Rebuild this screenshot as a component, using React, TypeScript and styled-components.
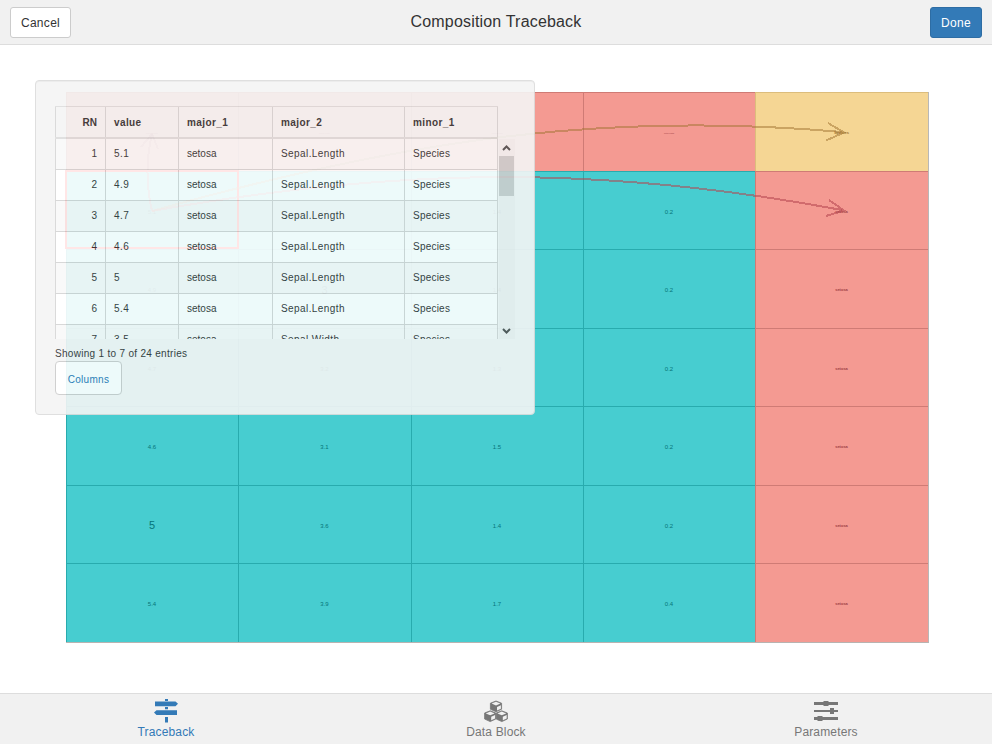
import React from "react";
import styled, { createGlobalStyle } from "styled-components";

type Tone = "corner" | "head" | "data";

const GlobalStyle = createGlobalStyle`
  * { box-sizing: border-box; }
  html, body { margin: 0; padding: 0; background: #fff; }
  body { font-family: "Liberation Sans", Arial, sans-serif; font-size: 12px; color: #333; overflow: hidden; }
`;

const Page = styled.div`
  display: flex;
  flex-direction: column;
  width: 992px;
  height: 744px;
`;

const TitleBar = styled.header`
  display: grid;
  grid-template-columns: 1fr auto 1fr;
  align-items: start;
  height: 45px;
  padding: 7px 10px 0;
  background: #f1f1f1;
  border-bottom: 1px solid #ddd;
`;

const Title = styled.h1`
  margin: 0;
  padding-top: 6px;
  font-size: 16px;
  line-height: 18px;
  font-weight: 400;
  letter-spacing: 0.18px;
`;

const BarButton = styled.button<{ $primary?: boolean }>`
  justify-self: ${(p) => (p.$primary ? "end" : "start")};
  width: ${(p) => (p.$primary ? 52 : 61)}px;
  height: 31px;
  padding: 1px 0 0;
  font: 12px/18px "Liberation Sans", Arial, sans-serif;
  letter-spacing: 0.3px;
  color: ${(p) => (p.$primary ? "#fff" : "#333")};
  background: ${(p) => (p.$primary ? "#337ab7" : "#fff")};
  border: 1px solid ${(p) => (p.$primary ? "#2e6da4" : "#ccc")};
  border-radius: 3px;
`;

const Stage = styled.main`
  position: relative;
  flex: 1;
  padding: 47px 0 0 66px;
`;

const BlockGrid = styled.div`
  display: grid;
  grid-template-columns: 172px 173px 172px 172px 173px;
  grid-template-rows: 79px 78px 79px 78px 79px 78px 79px;
  width: 863px;
  height: 551px;
  border-right: 1px solid #b8b8b8;
  border-bottom: 1px solid #b8b3b1;
`;

const fills: Record<Tone, string> = { corner: "#f5d694", head: "#f49a92", data: "#47cdd0" };
const edges: Record<Tone, string> = { corner: "#dcbd7c", head: "#cf7b75", data: "#28abae" };

const Cell = styled.div<{ $tone: Tone; $size: number }>`
  display: flex;
  align-items: center;
  justify-content: center;
  background: ${(p) => fills[p.$tone]};
  border-left: 1px solid ${(p) => edges[p.$tone]};
  border-top: 1px solid ${(p) => edges[p.$tone]};
  padding: 2px 1px 0 0;
  font-size: ${(p) => p.$size}px;
  font-weight: ${(p) => (p.$size === 4 ? 700 : 400)};
  line-height: 1;
  color: ${(p) => (p.$tone === "data" ? "#067579" : p.$tone === "head" ? "#a04045" : "#a07535")};
`;

const Links = styled.svg`
  position: absolute;
  left: 0;
  top: 0;
  pointer-events: none;
`;

const Panel = styled.section`
  position: absolute;
  left: 35px;
  top: 35px;
  width: 500px;
  height: 335px;
  padding: 25px 19px;
  background: #f5f5f5;
  border: 1px solid #dcdcdc;
  border-radius: 4px;
  box-shadow: inset 0 1px 1px rgba(0, 0, 0, 0.05);
  opacity: 0.9;
  font-size: 10px;
`;

const TableHead = styled.div`
  display: grid;
  grid-template-columns: 51px 73px 94px 132px 93px;
  width: 443px;
  height: 33px;
  border-top: 1px solid #ddd;
  border-bottom: 2px solid #ddd;
  font-weight: 700;
`;

const TableRow = styled.div<{ $odd: boolean }>`
  display: grid;
  grid-template-columns: 51px 73px 94px 132px 93px;
  height: 31px;
  background: ${(p) => (p.$odd ? "#f9f9f9" : "#fff")};
  border-bottom: 1px solid #d4d4d4;
`;

const TableCell = styled.div<{ $first?: boolean; $spacing?: number; $head?: boolean }>`
  padding: ${(p) => (p.$head ? "10px 8px 0" : "9px 8px 0")};
  line-height: 12px;
  white-space: nowrap;
  letter-spacing: ${(p) => p.$spacing ?? 0}px;
  text-align: ${(p) => (p.$first ? "right" : "left")};
  border-right: 1px solid #d6d6d6;
  border-left: ${(p) => (p.$first ? "1px solid #d6d6d6" : "0")};
`;

const ScrollArea = styled.div`
  display: flex;
  gap: 1px;
  height: 200px;
  overflow: hidden;
`;

const Rows = styled.div`
  width: 443px;
`;

const ScrollTrack = styled.div`
  display: flex;
  flex-direction: column;
  width: 16px;
  height: 200px;
  background: #f1f1f1;
`;

const ScrollThumb = styled.div`
  width: 15px;
  height: 40px;
  margin-bottom: auto;
  background: #cdcdcd;
`;

const Info = styled.div`
  margin-top: 9px;
  height: 13px;
  line-height: 12px;
  letter-spacing: 0.3px;
`;

const ColumnsButton = styled.button`
  display: block;
  width: 67px;
  height: 34px;
  margin: 0;
  padding: 3px 0 0;
  font: 10px/14px "Liberation Sans", Arial, sans-serif;
  letter-spacing: 0.3px;
  color: #2877b5;
  background: #fff;
  border: 1px solid #ccc;
  border-radius: 4px;
`;

const TabBar = styled.nav`
  display: grid;
  grid-template-columns: repeat(3, 330px);
  justify-content: center;
  height: 51px;
  background: #f1f1f1;
  border-top: 1px solid #ddd;
`;

const Tab = styled.div<{ $active?: boolean }>`
  display: flex;
  flex-direction: column;
  align-items: center;
  padding-top: 4px;
  color: ${(p) => (p.$active ? "#337ab7" : "#777")};
  line-height: 16px;
  letter-spacing: 0.15px;
`;

const TabIcon = styled.svg`
  display: block;
  width: 26px;
  height: 26px;
`;

const measures = [
  ["5.1", "3.5", "1.4", "0.2"],
  ["4.9", "3", "1.4", "0.2"],
  ["4.7", "3.2", "1.3", "0.2"],
  ["4.6", "3.1", "1.5", "0.2"],
  ["5", "3.6", "1.4", "0.2"],
  ["5.4", "3.9", "1.7", "0.4"],
];

const records = [
  ["5.1", "Sepal.Length"],
  ["4.9", "Sepal.Length"],
  ["4.7", "Sepal.Length"],
  ["4.6", "Sepal.Length"],
  ["5", "Sepal.Length"],
  ["5.4", "Sepal.Length"],
  ["3.5", "Sepal.Width"],
];

const Chevron = ({ up }: { up?: boolean }) => (
  <svg width="15" height="17" viewBox="0 0 15 17">
    <path d={up ? "M4 11 L7.5 7.5 L11 11" : "M4 7 L7.5 10.5 L11 7"} fill="none" stroke="#505050" strokeWidth="2" />
  </svg>
);

const Cube = ({ x, y }: { x: number; y: number }) => (
  <g transform={`translate(${x} ${y})`}>
    <path d="M6 0 L11.6 2.2 V8.2 L6 10.8 L0.4 8.2 V2.2 Z" fill="#777" stroke="#777" strokeWidth=".8" strokeLinejoin="round" />
    <path d="M6 .8 L10.4 2.6 L6 4.5 L1.6 2.6 Z" fill="#f1f1f1" />
    <path d="M7 5.9 L10.9 4.2 V7.7 L7 9.5 Z" fill="#f1f1f1" />
  </g>
);

export default function App() {
  return (
    <>
      <GlobalStyle />
      <Page>
        <TitleBar>
          <BarButton>Cancel</BarButton>
          <Title>Composition Traceback</Title>
          <BarButton $primary>Done</BarButton>
        </TitleBar>

        <Stage>
          <BlockGrid>
            {["Sepal.Length", "Sepal.Width", "Petal.Length", "Petal.Width"].map((name) => (
              <Cell key={name} $tone="head" $size={2}>{name}</Cell>
            ))}
            <Cell $tone="corner" $size={4}>Species</Cell>
            {measures.map((row, r) => (
              <React.Fragment key={r}>
                {row.map((value, c) => (
                  <Cell key={c} $tone="data" $size={value.length === 1 ? 11 : 6}>{value}</Cell>
                ))}
                <Cell $tone="head" $size={4}>setosa</Cell>
              </React.Fragment>
            ))}
          </BlockGrid>

          <Links width="992" height="648" viewBox="0 45 992 648" fill="none" strokeWidth="2" shapeRendering="crispEdges">
            <rect x="66" y="171" width="172" height="77" stroke="#f00" />
            <g stroke="#a07130" strokeOpacity=".5">
              <path d="M152 211 C400 141.5 600 110.5 842 132" />
              <path d="M828 123 L844 132.5 L826 140.5" />
            </g>
            <g stroke="#b4464e" strokeOpacity=".55">
              <path d="M152 211 C400 167 600 165 842 210" />
              <path d="M829 200 L844 210.5 L826 216" />
              <path d="M152 211 Q143 172 152 134" />
              <path d="M141 147 L152 134 L158 149" />
            </g>
          </Links>

          <Panel>
            <TableHead>
              <TableCell $first $head>RN</TableCell>
              {["value", "major_1", "major_2", "minor_1"].map((name) => (
                <TableCell key={name} $head $spacing={0.4}>{name}</TableCell>
              ))}
            </TableHead>
            <ScrollArea>
              <Rows>
                {records.map(([value, measure], i) => (
                  <TableRow key={i} $odd={i % 2 === 0}>
                    <TableCell $first>{i + 1}</TableCell>
                    <TableCell $spacing={0.4}>{value}</TableCell>
                    <TableCell>setosa</TableCell>
                    <TableCell $spacing={0.42}>{measure}</TableCell>
                    <TableCell $spacing={0.22}>Species</TableCell>
                  </TableRow>
                ))}
              </Rows>
              <ScrollTrack>
                <Chevron up />
                <ScrollThumb />
                <Chevron />
              </ScrollTrack>
            </ScrollArea>
            <Info>Showing 1 to 7 of 24 entries</Info>
            <ColumnsButton>Columns</ColumnsButton>
          </Panel>
        </Stage>

        <TabBar>
          <Tab $active>
            <TabIcon viewBox="0 0 26 26" fill="currentColor">
              <path d="M12 1h3v2h-3z M2 3.5h20.5l2.5 2.3-2.5 2.4H2z M12 9h3v2.2h-3z M3.5 12.2H24V17H3.5L1 14.6z M12 19h3v5.5h-3z" />
            </TabIcon>
            Traceback
          </Tab>
          <Tab>
            <TabIcon viewBox="0 0 26 26">
              <Cube x={7} y={3} />
              <Cube x={1.2} y={12.8} />
              <Cube x={12.8} y={12.8} />
            </TabIcon>
            Data Block
          </Tab>
          <Tab>
            <TabIcon viewBox="0 0 26 26" fill="currentColor">
              <path d="M1 4h24v3H1z M10.5 3h5v5h-5z M1 12h24v2H1z M17 10h4v6h-4z M1 19h24v3H1z M4.5 18h5v5h-5z" />
            </TabIcon>
            Parameters
          </Tab>
        </TabBar>
      </Page>
    </>
  );
}
